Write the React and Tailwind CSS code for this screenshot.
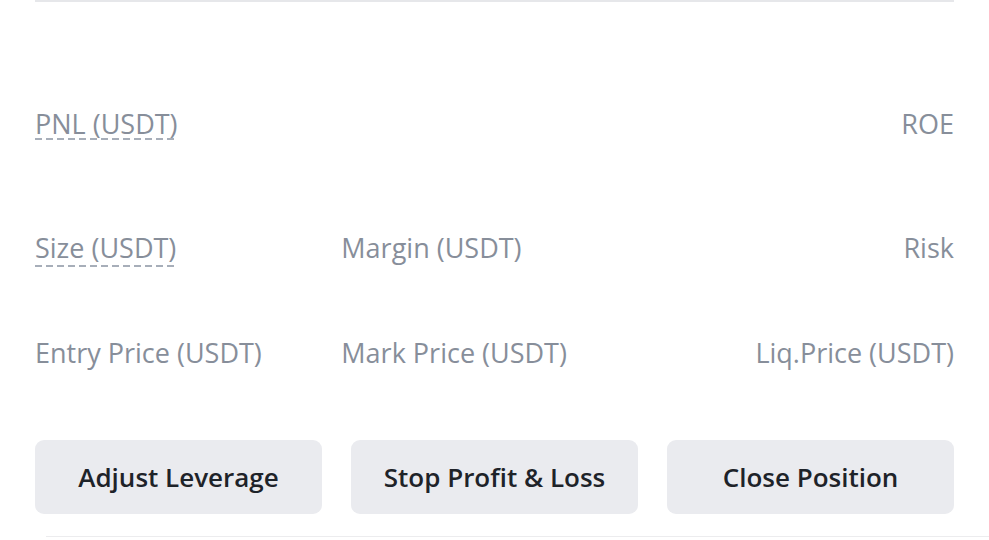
export default function App() {
  const dash =
    "bg-[repeating-linear-gradient(to_right,#a7aeb9_0_7px,transparent_7px_11px)] bg-no-repeat bg-[length:100%_2px] bg-bottom pb-[1px]";
  return (
    <div className="w-[989px] h-[540px] bg-white overflow-hidden font-['Open_Sans',sans-serif] text-[27px] text-[#878e9a]">
      <div className="px-[35px] pr-[35px]">
        <div className="h-[2px] bg-[#e6e7ea]" />
        <div className="mt-[106px] h-[32px] flex items-center justify-between leading-[32px]">
          <span className={dash + " leading-[30px]"}>PNL (USDT)</span>
          <span>ROE</span>
        </div>
        <div className="mt-[92px] h-[32px] grid grid-cols-3 items-center leading-[32px]">
          <div><span className={dash + " leading-[30px]"}>Size (USDT)</span></div>
          <div>Margin (USDT)</div>
          <div className="text-right">Risk</div>
        </div>
        <div className="mt-[73px] h-[32px] grid grid-cols-3 items-center leading-[32px]">
          <div>Entry Price (USDT)</div>
          <div>Mark Price (USDT)</div>
          <div className="text-right">Liq.Price (USDT)</div>
        </div>
        <div className="mt-[71px] grid grid-cols-3 gap-[29px]">
          {["Adjust Leverage", "Stop Profit & Loss", "Close Position"].map((t) => (
            <button
              key={t}
              className="h-[74px] rounded-[9px] bg-[#eaebef] text-[#1e2329] text-[26px] font-semibold flex items-center justify-center"
            >
              {t}
            </button>
          ))}
        </div>
      </div>
      <div className="mt-[22px] ml-[46px] h-px bg-[#ececee]" />
    </div>
  );
}
